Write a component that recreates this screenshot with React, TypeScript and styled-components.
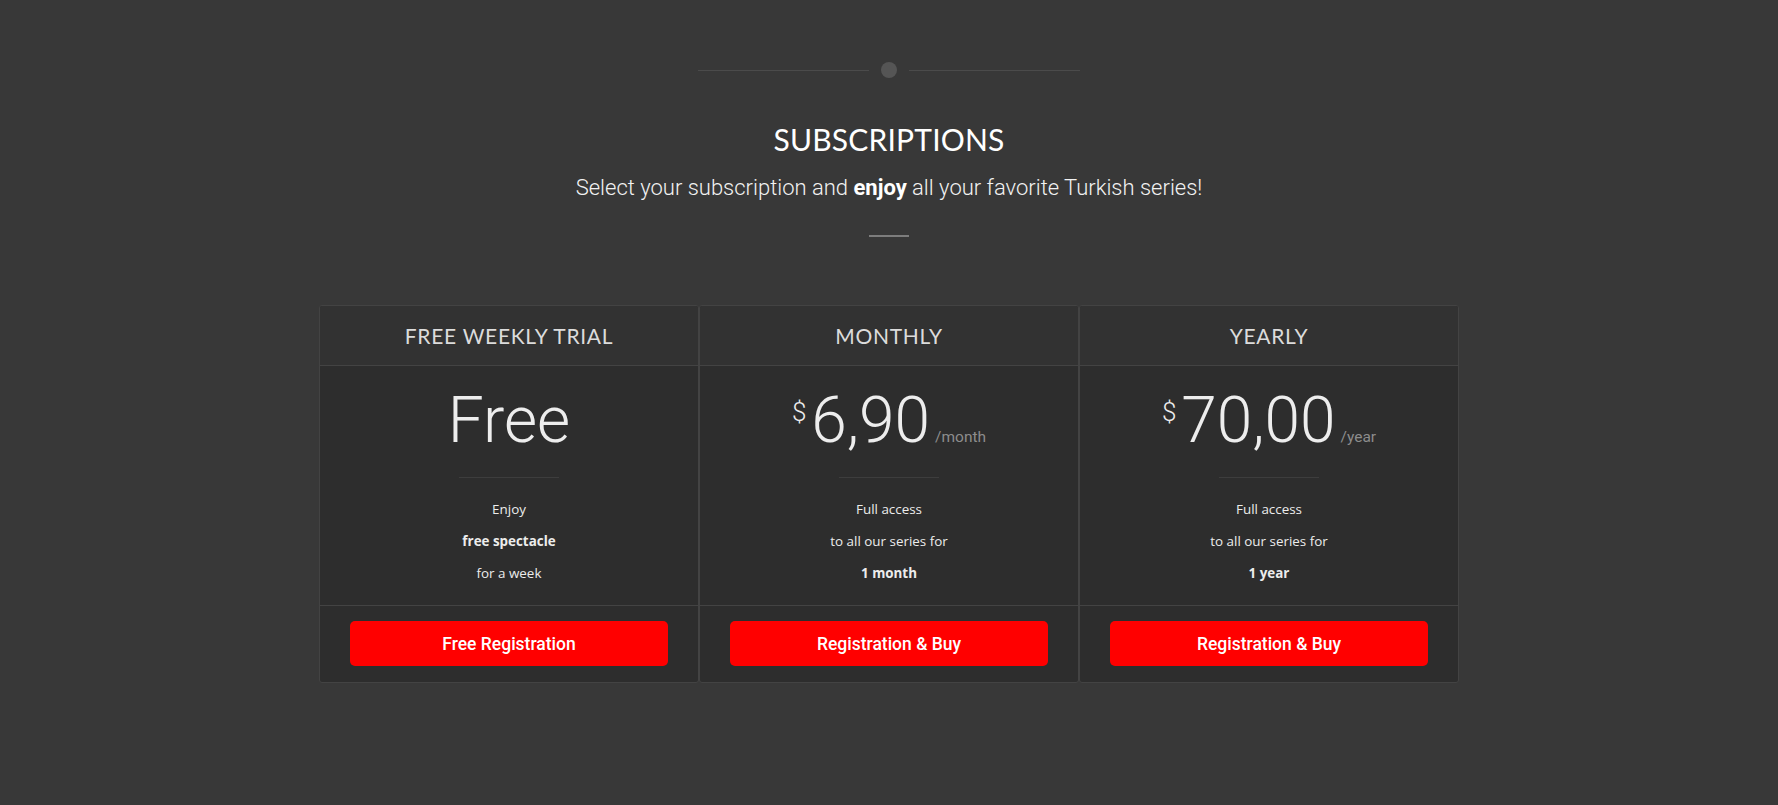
import React from 'react';
import styled, { createGlobalStyle } from 'styled-components';

interface Plan {
  title: string;
  currency?: string;
  amount: string;
  period?: string;
  lines: { text: string; bold?: boolean }[];
  cta: string;
}

const plans: Plan[] = [
  {
    title: 'FREE WEEKLY TRIAL',
    amount: 'Free',
    lines: [{ text: 'Enjoy' }, { text: 'free spectacle', bold: true }, { text: 'for a week' }],
    cta: 'Free Registration',
  },
  {
    title: 'MONTHLY',
    currency: '$',
    amount: '6,90',
    period: '/month',
    lines: [{ text: 'Full access' }, { text: 'to all our series for' }, { text: '1 month', bold: true }],
    cta: 'Registration & Buy',
  },
  {
    title: 'YEARLY',
    currency: '$',
    amount: '70,00',
    period: '/year',
    lines: [{ text: 'Full access' }, { text: 'to all our series for' }, { text: '1 year', bold: true }],
    cta: 'Registration & Buy',
  },
];

const GlobalStyle = createGlobalStyle`
  html, body {
    margin: 0;
    padding: 0;
    background: #383838;
  }
  * {
    box-sizing: border-box;
  }
`;

const Page = styled.main`
  min-height: 100vh;
  background: #383838;
  padding-top: 62px;
  display: flex;
  flex-direction: column;
  align-items: center;
  font-family: Roboto, 'Liberation Sans', sans-serif;
`;

const Ornament = styled.div`
  display: flex;
  align-items: center;
  gap: 12px;
`;

const OrnamentLine = styled.span`
  width: 171px;
  height: 1px;
  background: #4b4b4b;
`;

const OrnamentDot = styled.span`
  width: 16px;
  height: 16px;
  border-radius: 50%;
  background: #555555;
`;

const Title = styled.h2`
  margin: 43px 0 0;
  font-family: Lato, 'Open Sans', sans-serif;
  font-weight: 400;
  font-size: 30px;
  line-height: 36px;
  color: #ffffff;
  letter-spacing: 0.2px;
`;

const Subtitle = styled.p`
  margin: 17px 0 0;
  font-family: Roboto, sans-serif;
  font-weight: 300;
  font-size: 22px;
  line-height: 28px;
  color: #f2f2f2;

  strong {
    font-weight: 700;
    color: #ffffff;
  }
`;

const ShortRule = styled.span`
  display: block;
  width: 40px;
  height: 2px;
  margin-top: 33px;
  background: #7d7d7d;
`;

const PlanGrid = styled.section`
  display: grid;
  grid-template-columns: repeat(3, 380px);
  margin-top: 68px;
`;

const PlanCard = styled.article`
  border: 1px solid #434343;
  border-radius: 3px;
  overflow: hidden;
  display: flex;
  flex-direction: column;
  background: #2d2d2d;
`;

const PlanHeader = styled.header`
  height: 60px;
  display: flex;
  align-items: center;
  justify-content: center;
  background: #323232;
  border-bottom: 1px solid #434343;
  font-family: Lato, 'Open Sans', sans-serif;
  font-size: 21px;
  letter-spacing: 0.7px;
  color: #dcdcdc;
`;

const PlanBody = styled.div`
  height: 240px;
  padding-top: 24px;
  display: flex;
  flex-direction: column;
  align-items: center;
  border-bottom: 1px solid #434343;
`;

const Price = styled.div`
  height: 62px;
  line-height: 62px;
  white-space: nowrap;
  color: #ededed;
  font-family: Roboto, sans-serif;
  font-weight: 300;
`;

const Currency = styled.span`
  display: inline-block;
  vertical-align: top;
  font-size: 26px;
  line-height: 44px;
  margin-right: 5px;
`;

const Amount = styled.span`
  font-size: 64px;
`;

const Period = styled.span`
  font-size: 15.5px;
  margin-left: 5px;
  color: #8c8c8c;
  font-weight: 400;
`;

const PriceRule = styled.span`
  display: block;
  width: 100px;
  height: 1px;
  margin: 25px 0 15px;
  background: #3d3d3d;
`;

const Feature = styled.p<{ $bold?: boolean }>`
  margin: 0;
  line-height: 32px;
  font-family: 'Open Sans', sans-serif;
  font-size: 13.4px;
  font-weight: ${({ $bold }) => ($bold ? 700 : 400)};
  color: #ececec;
`;

const PlanFooter = styled.footer`
  padding: 15px 30px 16px;
`;

const BuyButton = styled.button`
  width: 100%;
  height: 45px;
  border: 0;
  border-radius: 5px;
  background: #ff0000;
  color: #ffffff;
  font-family: Roboto, sans-serif;
  font-weight: 500;
  font-size: 17.5px;
  cursor: pointer;
`;

const PlanColumn: React.FC<{ plan: Plan }> = ({ plan }) => (
  <PlanCard>
    <PlanHeader>{plan.title}</PlanHeader>
    <PlanBody>
      <Price>
        {plan.currency && <Currency>{plan.currency}</Currency>}
        <Amount>{plan.amount}</Amount>
        {plan.period && <Period>{plan.period}</Period>}
      </Price>
      <PriceRule />
      {plan.lines.map((line) => (
        <Feature key={line.text} $bold={line.bold}>
          {line.text}
        </Feature>
      ))}
    </PlanBody>
    <PlanFooter>
      <BuyButton>{plan.cta}</BuyButton>
    </PlanFooter>
  </PlanCard>
);

export default function App() {
  return (
    <>
      <GlobalStyle />
      <Page>
        <Ornament>
          <OrnamentLine />
          <OrnamentDot />
          <OrnamentLine />
        </Ornament>
        <Title>SUBSCRIPTIONS</Title>
        <Subtitle>
          Select your subscription and <strong>enjoy</strong> all your favorite Turkish series!
        </Subtitle>
        <ShortRule />
        <PlanGrid>
          {plans.map((plan) => (
            <PlanColumn key={plan.title} plan={plan} />
          ))}
        </PlanGrid>
      </Page>
    </>
  );
}
